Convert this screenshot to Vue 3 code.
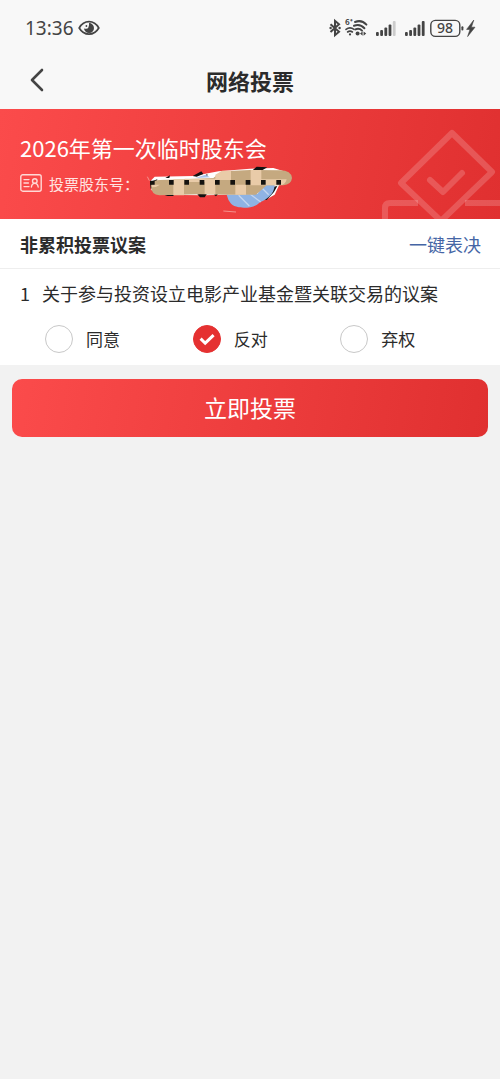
<template>
  <div class="vote-page">
    <!-- 系统状态栏 -->
    <div class="status-bar">
      <span class="time">13:36</span>
      <svg class="eye" viewBox="0 0 22 16" width="22" height="16">
        <path d="M1.2 8C6 -0.4 16 -0.4 20.8 8C16 16.2 6 16.2 1.2 8Z" fill="none" stroke="#444" stroke-width="1.7" />
        <path d="M11 3A5 5 0 1 1 6 8.4Q9.6 9.4 10.4 7.4Q11.4 5.4 11 3Z" fill="#444" />
        <circle cx="8.4" cy="6" r="0.9" fill="#444" />
      </svg>
      <div class="status-icons">
        <svg viewBox="0 0 160 22" width="160" height="22">
          <!-- 蓝牙 -->
          <path d="M10.5 7.2L19 14.8L15 18.2V3.8L19 7.2L10.5 15" fill="none" stroke="#444" stroke-width="2" />
          <circle cx="10.6" cy="11" r="1.2" fill="#444" />
          <circle cx="19.6" cy="11" r="1.2" fill="#444" />
          <!-- wifi -->
          <g fill="none" stroke="#444" stroke-linecap="round">
            <path d="M35 5Q41.6 2.4 46.4 7.6" stroke-width="2" />
            <path d="M34 8.8Q40 6.4 44.4 11.2" stroke-width="2" />
            <path d="M35.4 12.4Q39.2 10.8 42 13.6" stroke-width="2" />
            <path d="M26 12.4Q30 9.4 34 12.4" stroke-width="1.6" />
            <path d="M27.6 15Q30 13.2 32.4 15" stroke-width="1.6" />
          </g>
          <circle cx="30" cy="17.4" r="1.1" fill="#444" />
          <circle cx="37.6" cy="16.6" r="2" fill="#444" />
          <path d="M40 16.6L42.6 14.4V18.8ZM46.2 16.6L43.6 14.4V18.8Z" fill="#444" />
          <text x="25" y="8" class="wifi-gen">6⁺</text>
          <!-- 信号 -->
          <g fill="#444">
            <rect x="56" y="15" width="2.8" height="4" rx="1" />
            <rect x="60.2" y="13" width="2.8" height="6" rx="1" />
            <rect x="64.4" y="10.5" width="2.8" height="8.5" rx="1" />
            <rect x="68.6" y="7.5" width="2.8" height="11.5" rx="1" />
            <rect x="72.8" y="4" width="2.8" height="15" rx="1" fill="#ccc" />
            <rect x="85" y="15" width="2.8" height="4" rx="1" />
            <rect x="89.2" y="13" width="2.8" height="6" rx="1" />
            <rect x="93.4" y="10.5" width="2.8" height="8.5" rx="1" />
            <rect x="97.6" y="7.5" width="2.8" height="11.5" rx="1" />
            <rect x="101.8" y="4" width="2.8" height="15" rx="1" />
          </g>
          <!-- 电池 -->
          <rect x="110.8" y="3.4" width="29" height="16" rx="4.6" fill="none" stroke="#444" stroke-width="1.4" />
          <rect x="141.4" y="9.2" width="2" height="4.4" rx="1" fill="#444" />
          <text x="125" y="16.4" text-anchor="middle" class="battery-num">98</text>
          <path d="M153.8 3L146.6 12.4H150L147.6 19.6L155 10.2H151.4Z" fill="#444" stroke="#444" stroke-width="0.6" />
        </svg>
      </div>
    </div>

    <!-- 导航栏 -->
    <header class="nav-bar">
      <button class="back-btn" type="button" aria-label="返回">
        <svg viewBox="0 0 14 24" width="14" height="24">
          <path d="M12 2L2 12L12 22" fill="none" stroke="#444" stroke-width="2.6" stroke-linecap="round" stroke-linejoin="round" />
        </svg>
      </button>
      <h1 class="nav-title">网络投票</h1>
    </header>

    <!-- 会议信息 -->
    <section class="meeting">
      <svg class="meeting-bg" viewBox="0 0 120 92" width="120" height="92">
        <g fill="none" stroke="#fff" stroke-opacity="0.18" stroke-width="6" stroke-linejoin="round">
          <path d="M72 6L112 45L61 94L21 56Z" />
          <path d="M50 53L63 65L82 46" stroke-linecap="round" />
          <path d="M5 94V81Q5 76 10 76H38M85 76H124" />
        </g>
      </svg>
      <h2 class="meeting-title">2026年第一次临时股东会</h2>
      <div class="holder">
        <svg viewBox="0 0 22 18" width="22" height="18">
          <g fill="none" stroke="#ffd9d6" stroke-width="1.4" stroke-linecap="round" stroke-linejoin="round">
            <rect x="0.8" y="0.8" width="20.4" height="16.4" rx="2" />
            <path d="M4 5.6H9M4 9H8.4M4 12.6H9M11.4 13Q12 9.4 14.8 9.4T18.2 13" />
            <circle cx="14.8" cy="7" r="2.3" />
          </g>
        </svg>
        <span class="holder-label">投票股东号：</span>
        <svg class="scribble" viewBox="0 0 480 165" width="160" height="55">
          <path d="M32 62L44 50L160 48L236 34L330 26L400 24L432 34L420 70L404 104L380 118L340 116L262 104L190 106L60 104L34 90Z" fill="#fff" />
          <path d="M30 66L52 58L46 80L32 86ZM76 54L90 46L88 54ZM158 48L184 34L190 42L170 50ZM196 46L202 42V48ZM336 32L350 20L382 22L364 32ZM72 104L82 108H100L102 104ZM172 103L202 100L194 112H180ZM222 104L236 100L228 109ZM382 84L412 78L402 96L380 120L362 116L386 96Z" fill="#111" />
          <path d="M166 54L196 44L210 52Z" fill="#a9c4ec" />
          <path d="M260 104L352 102L372 74L404 74C404 104 376 120 358 128C340 148 286 148 272 130Q264 120 260 104Z" fill="#8fb3e3" />
          <path d="M296 106L328 138M330 102L362 126M366 84L386 104" stroke="#c3d5ef" stroke-width="4" />
          <path d="M34 74Q38 60 60 60L132 58L220 54L246 34L330 30L420 31Q454 32 456 54Q454 74 430 76L380 76L348 104L262 104L180 103L58 106Q30 102 34 74Z" fill="#c5a980" />
          <path d="M100 58H132V106H100ZM194 56H226V102H194ZM226 44L246 32L273 32V60H226ZM286 74H318V104H286ZM332 30H364V76H332ZM364 58H440Q436 76 418 76H364ZM134 56H194V66H134ZM34 74H60Q50 82 36 82Z" fill="#e9cba8" />
          <path d="M30 62H44V74H30ZM87 60H101V74H87ZM133 60H147V74H133ZM179 60H193V74H179ZM225 60H239V74H225ZM271 60H285V74H271ZM317 60H331V74H317ZM363 60H377V74H363ZM409 60H423V74H409Z" fill="#151310" />
          <path d="M22 50L28 62M250 153L288 156" stroke="#f5908c" stroke-width="3" />
        </svg>
      </div>
    </section>

    <!-- 议案列表 -->
    <section class="proposal">
      <div class="proposal-head">
        <h3 class="proposal-type">非累积投票议案</h3>
        <a class="quick-vote" href="#">一键表决</a>
      </div>
      <fieldset v-for="item in proposals" :key="item.no" class="proposal-item">
        <legend class="proposal-name">
          <span class="proposal-no">{{ item.no }}</span>
          <span>{{ item.name }}</span>
        </legend>
        <div class="options">
          <label v-for="opt in options" :key="opt.value" class="option">
            <span class="radio">
              <input v-model="item.choice" type="radio" :name="'proposal-' + item.no" :value="opt.value">
              <svg v-if="item.choice === opt.value" class="tick" viewBox="0 0 28 28" width="28" height="28">
                <path d="M7.6 13.6L12.2 18.2L20.6 10.2" fill="none" stroke="#fff" stroke-width="3" />
              </svg>
            </span>
            <span>{{ opt.label }}</span>
          </label>
        </div>
      </fieldset>
    </section>

    <div class="submit-area">
      <button class="submit-btn" type="button">立即投票</button>
    </div>
  </div>
</template>

<script setup>
import { ref } from 'vue';

// 表决选项
const options = [
  { label: '同意', value: 'agree' },
  { label: '反对', value: 'against' },
  { label: '弃权', value: 'abstain' }
];

// 议案数据
const proposals = ref([
  { no: 1, name: '关于参与投资设立电影产业基金暨关联交易的议案', choice: 'against' }
]);
</script>

<style>
body {
  background: #f2f2f2;
}
</style>

<style scoped>
.vote-page {
  min-height: 100vh;
  background: #f2f2f2;
  color: #2b2b2b;
  font-family: "Noto Sans CJK SC", sans-serif;
}

/* 状态栏 */
.status-bar {
  display: flex;
  align-items: center;
  height: 56px;
  padding: 0 20px 0 25px;
  background: #f8f8f8;
}

.time {
  font-family: "Noto Sans", "Noto Sans CJK SC", sans-serif;
  font-size: 19px;
  line-height: 24px;
  color: #444;
}

.eye {
  margin-left: 4px;
}

.status-icons {
  display: flex;
  margin-left: auto;
}

.wifi-gen {
  font-size: 8px;
  font-weight: bold;
  fill: #444;
}

.battery-num {
  font-family: "Noto Sans", sans-serif;
  font-size: 14px;
  font-weight: 500;
  fill: #444;
}

/* 导航栏 */
.nav-bar {
  display: grid;
  grid-template-columns: 48px 1fr 48px;
  align-items: center;
  height: 53px;
  background: #f8f8f8;
}

.back-btn {
  display: flex;
  justify-content: flex-end;
  padding: 0 4px 5px 0;
  border: none;
  background: none;
}

.nav-title {
  margin: 0;
  padding-bottom: 6px;
  font-size: 22px;
  font-weight: bold;
  line-height: 32px;
  text-align: center;
}

/* 会议信息 */
.meeting {
  position: relative;
  padding: 22px 20px 24px;
  background: linear-gradient(100deg, #fb4b4b, #e03030);
  color: #fff;
}

.meeting-bg {
  position: absolute;
  right: 0;
  bottom: 0;
}

.meeting-title {
  margin: 0 0 8px;
  font-size: 22px;
  font-weight: normal;
  line-height: 32px;
}

.holder {
  position: relative;
  display: flex;
  align-items: center;
  height: 24px;
}

.holder-label {
  margin-left: 7px;
  font-size: 15px;
  color: #ffe3e1;
}

/* 涂抹层盖在股东号上 */
.scribble {
  position: absolute;
  top: -11px;
  left: 120px;
}

/* 议案 */
.proposal {
  background: #fff;
}

.proposal-head {
  display: flex;
  align-items: center;
  justify-content: space-between;
  height: 49px;
  padding: 0 19px 0 20px;
  border-bottom: 1px solid #eee;
}

.proposal-type {
  margin: 0;
  font-size: 18px;
  font-weight: bold;
}

.quick-vote {
  font-size: 18px;
  color: #4565a5;
  text-decoration: none;
}

.proposal-item {
  min-width: 0;
  margin: 0;
  padding: 0 12px 12px 45px;
  border: none;
}

.proposal-name {
  display: flex;
  margin-left: -25px;
  padding: 10px 0 18px;
  font-size: 18px;
  line-height: 28px;
}

.proposal-no {
  width: 22px;
  flex-shrink: 0;
}

.options {
  display: grid;
  grid-template-columns: repeat(3, 1fr);
}

.option {
  display: flex;
  align-items: center;
  gap: 13px;
  font-size: 17px;
  line-height: 28px;
}

.radio {
  position: relative;
  width: 28px;
  height: 28px;
}

.radio input {
  display: block;
  width: 28px;
  height: 28px;
  margin: 0;
  border: 1px solid #c8c8c8;
  border-radius: 50%;
  background: #fff;
  appearance: none;
}

.radio input:checked {
  border-color: #e53131;
  background: #e53131;
}

.tick {
  position: absolute;
  top: 0;
  left: 0;
  pointer-events: none;
}

/* 提交 */
.submit-area {
  padding: 14px 12px;
}

.submit-btn {
  display: block;
  width: 100%;
  height: 58px;
  padding: 0 0 2px;
  border: none;
  border-radius: 10px;
  background: linear-gradient(100deg, #fb4b4b, #e03030);
  color: #fff;
  font-family: inherit;
  font-size: 23px;
}
</style>
